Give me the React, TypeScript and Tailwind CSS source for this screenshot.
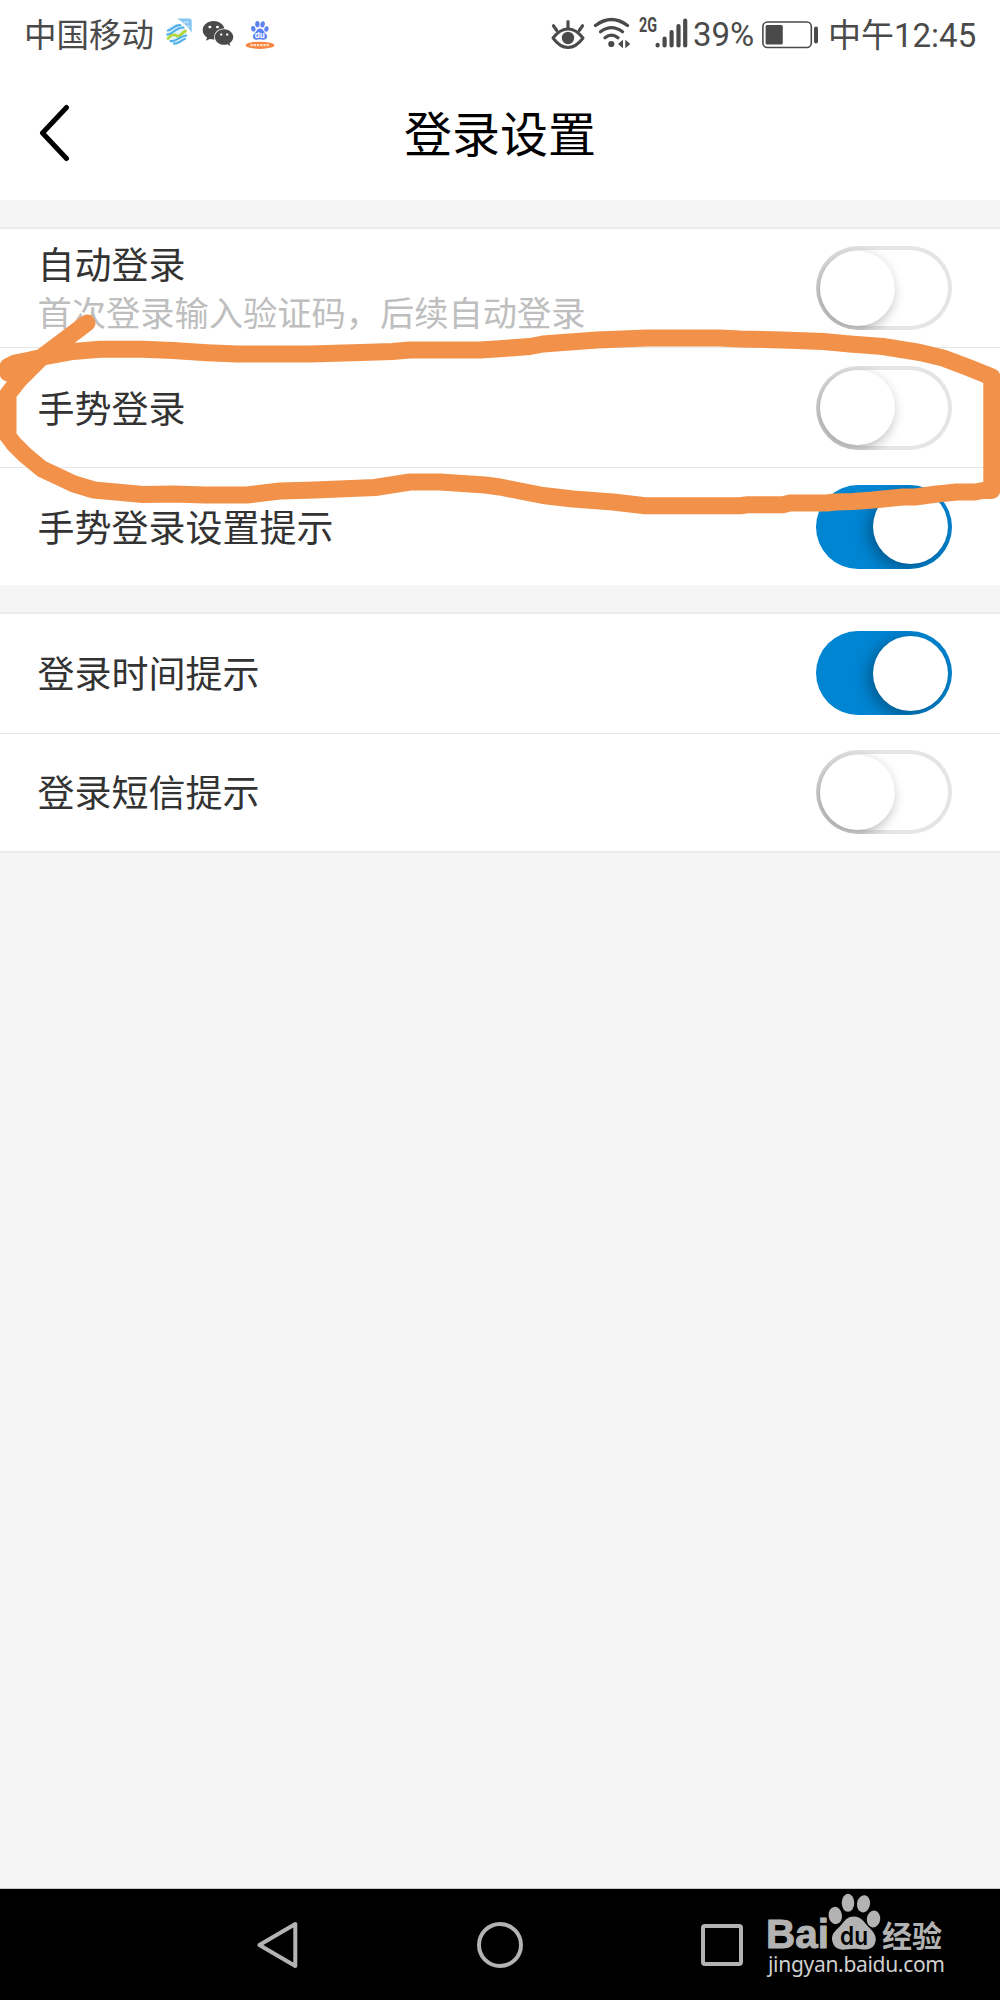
import { FaWeixin } from "react-icons/fa";

interface SettingItem {
  label: string;
  hint?: string;
  enabled: boolean;
}

const gestureItems: SettingItem[] = [
  { label: "自动登录", hint: "首次登录输入验证码，后续自动登录", enabled: false },
  { label: "手势登录", enabled: false },
  { label: "手势登录设置提示", enabled: true },
];

const noticeItems: SettingItem[] = [
  { label: "登录时间提示", enabled: true },
  { label: "登录短信提示", enabled: false },
];

function CarrierIcon() {
  return (
    <svg className="h-[28px] w-[28px]" viewBox="0 0 28 28" fill="none">
      <path d="M11 .5 H23.5 Q25.7 .5 25.7 2.7 V14.5 C22 9 17.5 4.5 11 .5 Z" fill="#84c7f2" />
      <path d="M18 4.2 L20 5.2 M21 3 L22 5 M21.5 7.5 L23.5 9" stroke="#cde9fa" strokeWidth="1.5" />
      <circle cx="10.5" cy="16" r="10.2" fill="#e3f3fc" />
      <g strokeWidth="2.1" strokeLinecap="round">
        <path d="M1.8 12.5 C6 12.5 8 6.5 14.5 7.2" stroke="#4fb0e8" />
        <path d="M1.2 16.5 C7 16.5 9 9.5 17.5 9.5" stroke="#4fb0e8" />
        <path d="M2 20.5 C5 16.5 8.5 16 11 18 C14 19.5 16.5 13.5 19.5 13" stroke="#b3d63c" strokeWidth="2.8" />
        <path d="M4.5 23 C10 24.5 13.5 18 20.3 17.5" stroke="#4fb0e8" />
        <path d="M8 25.6 C13 26 15.5 21.5 19 21" stroke="#4fb0e8" />
      </g>
    </svg>
  );
}

function BaiduAppIcon() {
  return (
    <svg className="h-[32px] w-[30px]" viewBox="0 0 30 32">
      <g fill="#5b82f0">
        <ellipse cx="8.3" cy="10.8" rx="2.2" ry="2.9" transform="rotate(-15 8.3 10.8)" />
        <ellipse cx="12.4" cy="6.2" rx="2.2" ry="3.1" />
        <ellipse cx="17.6" cy="6.4" rx="2.2" ry="3.1" transform="rotate(10 17.6 6.4)" />
        <ellipse cx="21.4" cy="11" rx="2.1" ry="2.8" transform="rotate(15 21.4 11)" />
        <path d="M15 10.5 C18 10.5 18.5 13.5 20.5 15.5 C23.5 18 22 22 18.5 21.7 Q15 21 11.5 21.7 C8 22 6.5 18 9.5 15.5 C11.5 13.5 12 10.5 15 10.5 Z" />
      </g>
      <text x="14.8" y="20.3" textAnchor="middle" fontSize="8" fontWeight="700" fill="#fff" fontFamily="Inter, sans-serif">
        du
      </text>
      <ellipse cx="15" cy="27.3" rx="14.4" ry="3.6" fill="#f5853f" />
      <path d="M5.5 27.1 H24.5" stroke="#ffdcc6" strokeWidth="2.4" strokeDasharray="2.4 .8" />
    </svg>
  );
}

function EyeIcon() {
  return (
    <svg className="h-[32px] w-[34px]" viewBox="0 0 34 32" fill="none" stroke="#4a4a4a">
      <path d="M2 20 Q9 11 17 11 Q25 11 32 20 Q25 29.5 17 29.5 Q9 29.5 2 20 Z" strokeWidth="3" strokeLinejoin="round" />
      <path d="M17 3.5 V10 M2.5 7.8 L5.8 12.5 M31.5 7.8 L28.2 12.5" strokeWidth="3.2" strokeLinecap="round" />
      <circle cx="17" cy="20" r="6.2" fill="#4a4a4a" stroke="none" />
    </svg>
  );
}

function WifiIcon() {
  return (
    <svg className="h-[32px] w-[38px]" viewBox="0 0 38 32" fill="none" stroke="#4a4a4a" strokeWidth="3.3" strokeLinecap="round">
      <path d="M2.5 8.5 Q18.5 -3.5 34.5 8.5" />
      <path d="M7.5 14.8 Q18.5 6.5 29.5 14.8" />
      <path d="M12 20.8 Q18.5 15.5 25 20.8" />
      <circle cx="18.3" cy="27" r="3.1" fill="#4a4a4a" stroke="none" />
      <path d="M30 22.8 V31.2 L25 27 Z M32.3 22.8 V31.2 L37.2 27 Z" fill="#4a4a4a" stroke="none" />
    </svg>
  );
}

function SignalIcon() {
  return (
    <svg className="h-[32px] w-[33px]" viewBox="0 0 33 32" fill="none" stroke="#4a4a4a" strokeWidth="4.2" strokeLinecap="round">
      <path d="M2.6 27.9 V28.4 M9.6 21.5 V28.4 M16.6 15 V28.4 M23.5 9 V28.4 M30.2 3.5 V28.4" />
    </svg>
  );
}

function BatteryIcon() {
  return (
    <svg className="h-[28px] w-[57px]" viewBox="0 0 57 28" fill="none">
      <rect x=".9" y="1" width="48.4" height="25.5" rx="4.5" stroke="#4a4a4a" strokeWidth="1.6" />
      <rect x="3.6" y="4" width="17.2" height="19.6" rx="1.5" fill="#4a4a4a" />
      <rect x="52" y="5.5" width="4" height="17" rx="2" fill="#4a4a4a" />
    </svg>
  );
}

function StatusBar() {
  return (
    <div className="flex h-[66px] items-start justify-between pl-[24px] pr-[22px] text-[#4a4a4a]">
      <div className="flex items-start">
        <span className="mt-[9px] h-[48px] w-[130px] whitespace-nowrap text-[32.5px] leading-[48px]">中国移动</span>
        <span className="ml-[12px] mt-[18px]">
          <CarrierIcon />
        </span>
        <FaWeixin className="ml-[8px] mt-[18px] h-[31px] w-[32px]" />
        <span className="ml-[11px] mt-[18px]">
          <BaiduAppIcon />
        </span>
      </div>
      <div className="flex items-start">
        <span className="mt-[18px]">
          <EyeIcon />
        </span>
        <span className="ml-[8px] mt-[17px]">
          <WifiIcon />
        </span>
        <span className="ml-[8px] mt-[15px] h-[20px] w-[17px] origin-left scale-x-[0.72] font-['Roboto'] text-[20px] font-bold leading-[20px]">
          2G
        </span>
        <span className="-ml-[1px] mt-[17px]">
          <SignalIcon />
        </span>
        <span className="ml-[5px] mt-[12px] w-[61px] whitespace-nowrap font-['Roboto'] text-[33px] leading-[46px]">39%</span>
        <span className="ml-[8px] mt-[21px]">
          <BatteryIcon />
        </span>
        <span className="ml-[9px] mt-[9px] w-[150px] whitespace-nowrap text-[33px] leading-[48px]">
          中午<span className="font-['Roboto']">12:45</span>
        </span>
      </div>
    </div>
  );
}

function TitleBar() {
  return (
    <header className="grid h-[134px] grid-cols-[1fr_auto_1fr] items-center">
      <button className="ml-[38.5px] h-[58px] w-[32px]" aria-label="返回">
        <svg className="h-[58px] w-[32px]" viewBox="0 0 32 58" fill="none" stroke="#000" strokeWidth="5" strokeLinecap="round" strokeLinejoin="round">
          <path d="M27.5 3.5 L3.5 29 L27.5 54.5" />
        </svg>
      </button>
      <h1 className="pb-[5px] text-[48px] leading-[60px] text-black">登录设置</h1>
    </header>
  );
}

function Toggle({ enabled }: { enabled: boolean }) {
  return (
    <button
      role="switch"
      aria-checked={enabled}
      className={
        enabled
          ? "flex h-[84px] w-[136px] items-center justify-end overflow-hidden rounded-full bg-[#0085d3] pr-[4px]"
          : "flex h-[84px] w-[136px] items-center overflow-hidden rounded-full bg-white pl-[4px] shadow-[inset_0_0_0_4px_#e5e5e5]"
      }
    >
      <span
        className={
          enabled
            ? "h-[75px] w-[75px] rounded-full bg-white shadow-[-4px_4px_16px_rgba(0,0,0,0.36)]"
            : "h-[75px] w-[75px] rounded-full bg-white shadow-[-3px_4px_13px_rgba(0,0,0,0.32)]"
        }
      />
    </button>
  );
}

function SettingRow({ label, hint, enabled }: SettingItem) {
  return (
    <div className="flex h-[119.4px] items-center justify-between border-b-[1.5px] border-[#e7e7e7] bg-white pl-[37.5px] pr-[48px] last:h-[117.5px] last:border-b-0">
      <div className="flex flex-col pb-[2px]">
        <span className="text-[37px] leading-[48px] text-[#333]">{label}</span>
        {hint && <span className="text-[34.25px] leading-[48px] text-[#bebebe]">{hint}</span>}
      </div>
      <Toggle enabled={enabled} />
    </div>
  );
}

function SettingGroup({ items }: { items: SettingItem[] }) {
  return (
    <section className="mt-[27px] border-t-2 border-[#ebebeb]">
      {items.map((item) => (
        <SettingRow key={item.label} {...item} />
      ))}
    </section>
  );
}

// Hand drawn ring around the gesture login row
function MarkerRing() {
  return (
    <svg
      className="pointer-events-none absolute left-0 top-[308px] h-[213px] w-[1000px]"
      viewBox="0 308 1000 213"
      fill="none"
      stroke="#f29149"
      strokeWidth="17"
      strokeLinecap="round"
      strokeLinejoin="round"
    >
      <path d="M87 323 L43 356 L19 380 L8 394 V436 L14 444 L25 455 L42 469 L57 476 L74 484 L94 490 L143 494.5 L173 494 L205 495 H247 L280 491 L315 490 L375 487.5 L410 482 H440 L485 485 L500 487 L543 495.5 L573 499 L613 502 L645 505.7 H740 L748 504.7 H783 L790 503 H827 L835 502 L853 501.5 L873 500 L903 497 H915 L937 494 L957 492 H975 L983 490.5 H991.8 V377 L967 367 L943 358 L920 352.5 L883 346.5 L850 344 L823 341.5 L783 340 L740 339 L720 338 H647 L597 340 L543 344 L530 346.5 L500 348.7 L480 350 H410 L392 351.5 L353 352.7 L310 354 H237 L207 352.7 L173 350.5 L143 349.3 H100 L73 351.5 L43 357 L30 360 L15 363 L8 366.5 V373 L16 376 L30 363" />
      <path d="M8 366 L43 357 L12 388 Z" fill="#f29149" stroke="none" />
    </svg>
  );
}

function Watermark() {
  return (
    <div className="absolute left-[765px] top-[1890px]">
      <svg className="h-[95px] w-[190px]" viewBox="0 0 190 95">
        <g fill="#b3b3b3">
          <text x="1" y="58.4" fontSize="40" fontWeight="700" textLength="63" lengthAdjust="spacingAndGlyphs" stroke="#b3b3b3" strokeWidth="1" fontFamily="'Liberation Sans', sans-serif">
            Bai
          </text>
          <ellipse cx="70.3" cy="25.5" rx="6.7" ry="8.7" transform="rotate(-8 70.3 25.5)" />
          <ellipse cx="83" cy="12.8" rx="6.3" ry="9" />
          <ellipse cx="98.5" cy="13.8" rx="6.5" ry="8.7" transform="rotate(10 98.5 13.8)" />
          <ellipse cx="108.5" cy="29" rx="6.7" ry="8.5" transform="rotate(8 108.5 29)" />
          <path d="M89 26.5 C96 26.5 99 32 103 36.5 C108 41 111 45 110.8 50 C110 57 105 60 98 59.5 C90 58 86 59 80 59.6 C73 60 67.5 57 67 49 C67 42 72 40 77 34 C80 30 83 26.5 89 26.5 Z" />
          <text x="117" y="56.5" fontSize="30" fontWeight="700" textLength="60" lengthAdjust="spacingAndGlyphs" fontFamily="'Noto Sans CJK SC', sans-serif">
            经验
          </text>
          <text x="3" y="82" fontSize="21" textLength="177" lengthAdjust="spacing" fill="#d0d0d0" fontFamily="'Noto Sans', sans-serif">
            jingyan.baidu.com
          </text>
        </g>
        <text x="75" y="54.6" fontSize="25" fontWeight="600" textLength="28" lengthAdjust="spacingAndGlyphs" fill="#000" fontFamily="Inter, sans-serif">
          du
        </text>
      </svg>
    </div>
  );
}

function NavigationBar() {
  return (
    <nav className="flex h-[111px] items-center bg-black pl-[256px]">
      <svg className="h-[48px] w-[42px]" viewBox="0 0 42 48" fill="none" stroke="#b3b3b3" strokeWidth="4" strokeLinejoin="round">
        <path d="M39.3 3 V45 L3.4 24 Z" />
      </svg>
      <span className="ml-[179px] h-[46px] w-[46px] rounded-full border-4 border-[#b3b3b3]" />
      <span className="ml-[178px] h-[42px] w-[42px] rounded-[4px] border-4 border-[#b3b3b3]" />
    </nav>
  );
}

export default function App() {
  return (
    <div className="relative flex h-[2000px] w-[1000px] flex-col overflow-hidden bg-[#f5f5f5] font-['Noto_Sans_CJK_SC',sans-serif]">
      <div className="bg-white">
        <StatusBar />
        <TitleBar />
      </div>
      <main className="flex-1 border-b border-[#c8c8c8]">
        <SettingGroup items={gestureItems} />
        <SettingGroup items={noticeItems} />
        <div className="h-[2px] bg-[#ebebeb]" />
      </main>
      <NavigationBar />
      <MarkerRing />
      <Watermark />
    </div>
  );
}
